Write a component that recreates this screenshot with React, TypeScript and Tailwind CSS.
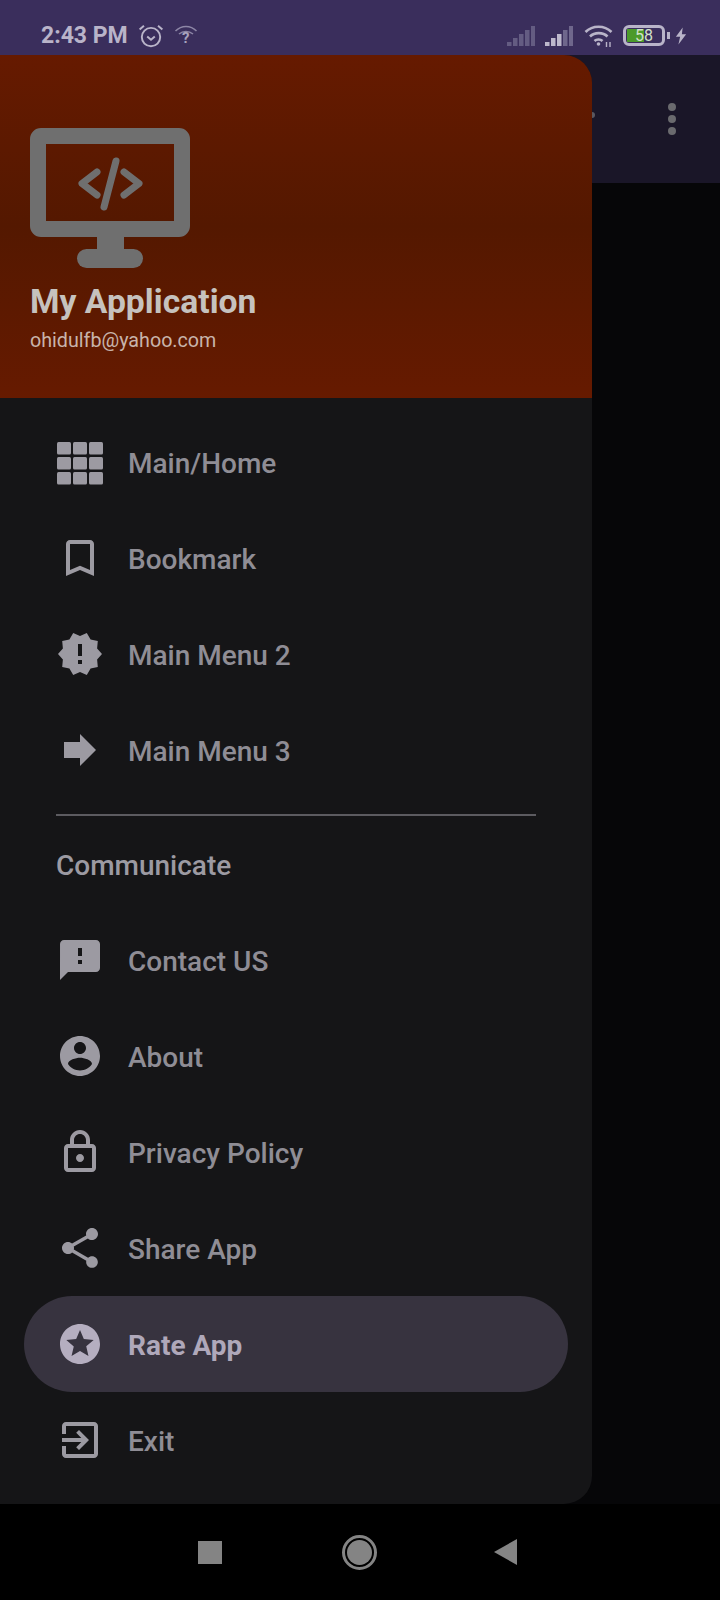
import type { ReactNode } from 'react';

const ROBOTO = 'font-["Roboto",sans-serif]';

function MaterialIcon({ d, className = '' }: { d: string; className?: string }) {
  return (
    <svg viewBox="0 0 24 24" className={`w-12 h-12 fill-current ${className}`}>
      <path d={d} />
    </svg>
  );
}

function GridIcon() {
  const xs = [1, 17, 33];
  const ys = [4, 19, 34];
  return (
    <svg viewBox="0 0 48 48" className="w-12 h-12 fill-current">
      {ys.map((y) =>
        xs.map((x) => <rect key={`${x}-${y}`} x={x} y={y} width="14" height="12.500" rx="1.500" />),
      )}
    </svg>
  );
}

const ICONS = {
  bookmark: 'M17 3H7c-1.1 0-2 .9-2 2v16l7-3 7 3V5c0-1.1-.9-2-2-2zm0 15l-5-2.18L7 18V5h10v13z',
  release:
    'M23 12l-2.44-2.78.34-3.68-3.61-.82-1.89-3.18L12 3 8.6 1.54 6.71 4.72l-3.61.81.34 3.68L1 12l2.44 2.78-.34 3.69 3.61.82 1.89 3.18L12 21l3.4 1.46 1.89-3.18 3.61-.82-.34-3.68L23 12zm-10 5h-2v-2h2v2zm0-4h-2V7h2v6z',
  forward: 'M12 8V4l8 8-8 8v-4H4V8z',
  sms: 'M20 2H4c-1.1 0-1.99.9-1.99 2L2 22l4-4h14c1.1 0 2-.9 2-2V4c0-1.1-.9-2-2-2zm-7 12h-2v-2h2v2zm0-4h-2V6h2v4z',
  account:
    'M12 2C6.48 2 2 6.48 2 12s4.48 10 10 10 10-4.48 10-10S17.52 2 12 2zm0 3c1.66 0 3 1.34 3 3s-1.34 3-3 3-3-1.34-3-3 1.34-3 3-3zm0 14.2c-2.5 0-4.71-1.28-6-3.22.03-1.99 4-3.08 6-3.08 1.99 0 5.97 1.09 6 3.08-1.29 1.94-3.5 3.22-6 3.22z',
  lock: 'M18 8h-1V6c0-2.76-2.24-5-5-5S7 3.24 7 6v2H6c-1.1 0-2 .9-2 2v10c0 1.1.9 2 2 2h12c1.1 0 2-.9 2-2V10c0-1.1-.9-2-2-2zM9 6c0-1.66 1.34-3 3-3s3 1.34 3 3v2H9V6zm9 14H6V10h12v10zm-6-3c1.1 0 2-.9 2-2s-.9-2-2-2-2 .9-2 2 .9 2 2 2z',
  share:
    'M18 16.08c-.76 0-1.44.3-1.96.77L8.91 12.7c.05-.23.09-.46.09-.7s-.04-.47-.09-.7l7.05-4.11c.54.5 1.25.81 2.04.81 1.66 0 3-1.34 3-3s-1.34-3-3-3-3 1.34-3 3c0 .24.04.47.09.7L8.04 9.81C7.5 9.31 6.79 9 6 9c-1.66 0-3 1.34-3 3s1.34 3 3 3c.79 0 1.5-.31 2.04-.81l7.12 4.16c-.05.21-.08.43-.08.65 0 1.61 1.31 2.92 2.92 2.92 1.61 0 2.92-1.31 2.92-2.92s-1.31-2.92-2.92-2.92z',
  star: 'M11.99 2C6.47 2 2 6.48 2 12s4.47 10 9.99 10C17.52 22 22 17.52 22 12S17.52 2 11.99 2zm4.24 16L12 15.45 7.77 18l1.12-4.81-3.73-3.23 4.92-.42L12 5l1.92 4.53 4.92.42-3.73 3.23L16.23 18z',
  exit: 'M10.09 15.59L11.5 17l5-5-5-5-1.41 1.41L12.67 11H3v2h9.67l-2.58 2.59zM19 3H5c-1.11 0-2 .9-2 2v4h2V5h14v14H5v-4H3v4c0 1.1.89 2 2 2h14c1.1 0 2-.9 2-2V5c0-1.1-.9-2-2-2z',
};

function MenuRow({ icon, label, active }: { icon: ReactNode; label: string; active?: boolean }) {
  return (
    <div
      className={`h-24 flex items-center mx-6 pl-8 rounded-[48px] ${
        active ? 'bg-[#37333f] text-[#afa8ba]' : 'text-[#8f8d95]'
      }`}
    >
      <div className={active ? 'text-[#b5aec0]' : 'text-[#9c9aa2]'}>{icon}</div>
      <span className={`ml-6 pt-1 text-[28px] leading-none ${active ? 'font-bold' : 'font-medium'}`}>{label}</span>
    </div>
  );
}

function Signal({ bright, dim }: { bright: number; dim: string }) {
  const bars = [4, 8, 12, 16, 20];
  return (
    <svg width="28" height="22" viewBox="0 0 28 22">
      {bars.map((h, i) => (
        <rect key={h} x={i * 6} y={21 - h} width="4.500" height={h} fill={i < bright ? '#bdb8cc' : dim} />
      ))}
    </svg>
  );
}

function StatusBar() {
  return (
    <div className="h-[55px] bg-[#3a2e5c] flex items-center pt-4 pl-[41px] pr-[33px] text-[#b9b4c9]">
      <span className="text-[23px] font-bold leading-none">2:43 PM</span>
      <svg width="26" height="26" viewBox="0 0 24 24" className="ml-[10px] fill-none stroke-current" strokeWidth="1.800">
        <circle cx="12" cy="13" r="8.500" />
        <path d="M8.500 12.500l3.500 3 3.500-3M1.500 6l4-3.500M22.500 6l-4-3.500" />
      </svg>
      <div className="relative ml-[10px] w-6 h-6">
        <svg width="24" height="24" viewBox="0 0 24 24" className="fill-none stroke-[#8d86a6]" strokeWidth="1.500">
          <path d="M1.500 7c6-6 15-6 21 0M5 10c4-3.500 10-3.500 14 0" />
        </svg>
        <span className="absolute inset-x-0 top-[5px] text-center text-[15px] leading-[18px] font-bold text-[#a8a2bd]">?</span>
      </div>
      <div className="flex-1" />
      <Signal bright={0} dim="#645c82" />
      <div className="w-[10px]" />
      <Signal bright={3} dim="#6f678c" />
      <svg width="30" height="24" viewBox="0 0 30 24" className="ml-[11px] fill-none stroke-current" strokeWidth="2.600">
        <path d="M1.500 8c7-7 19-7 26 0M6 12.500c4.500-4.500 13-4.500 17.500 0M10.500 17c2-2 6-2 8 0" />
        <circle cx="14.500" cy="20" r="1.800" fill="currentColor" stroke="none" />
        <path d="M22.500 18v5M26 18v5" strokeWidth="1.400" />
      </svg>
      <div className="ml-[9px] w-[42px] h-[21px] rounded-[6px] border-[3px] border-current flex items-center p-[1px] relative">
        <div className="h-full w-[17px] bg-[#4b9a2a]" />
        <span className="absolute inset-0 flex items-center justify-center text-[16px] leading-none text-[#d2e0ca]">
          58
        </span>
      </div>
      <div className="ml-[2px] w-[3px] h-[7px] bg-current" />
      <svg width="12" height="18" viewBox="0 0 14 20" className="ml-[5px] fill-current">
        <path d="M9 0L1 11h5l-2 9 9-12H8z" />
      </svg>
    </div>
  );
}

function MonitorLogo() {
  return (
    <svg width="160" height="141" viewBox="0 0 160 141" className="text-[#6f6f6f]">
      <rect x="8" y="8" width="144" height="93" rx="3" fill="none" stroke="currentColor" strokeWidth="16" />
      <rect x="67" y="105" width="27" height="20" fill="currentColor" />
      <rect x="47" y="121" width="66" height="19" rx="9.500" fill="currentColor" />
      <path
        d="M67 44L52 55.500 67 67M94 44L109 55.500 94 67M86 33L74 79"
        fill="none"
        stroke="currentColor"
        strokeWidth="7"
        strokeLinecap="round"
        strokeLinejoin="round"
      />
    </svg>
  );
}

function Drawer() {
  return (
    <div className="relative z-10 w-[592px] shrink-0 rounded-r-[28px] bg-[#151517] overflow-hidden">
      <div className="h-[343px] pl-[30px] pt-[73px] bg-gradient-to-b from-[#661a00] via-[#541800] to-[#661a00]">
        <MonitorLogo />
        <div className="mt-[14px] text-[33.700px] leading-[38px] font-bold text-[#c6c2be]">My Application</div>
        <div className="mt-[8px] text-[19.700px] leading-[24px] text-[#c8b4ab]">ohidulfb@yahoo.com</div>
      </div>

      <div className="pt-4">
        <MenuRow icon={<GridIcon />} label="Main/Home" />
        <MenuRow icon={<MaterialIcon d={ICONS.bookmark} />} label="Bookmark" />
        <MenuRow icon={<MaterialIcon d={ICONS.release} />} label="Main Menu 2" />
        <MenuRow icon={<MaterialIcon d={ICONS.forward} />} label="Main Menu 3" />

        <div className="mx-14 mt-4 h-[2px] bg-[#5c5b60]" />
        <div className="h-24 pl-14 pt-1 flex items-center text-[28px] font-medium text-[#9c9aa2]">Communicate</div>

        <MenuRow icon={<MaterialIcon d={ICONS.sms} />} label="Contact US" />
        <MenuRow icon={<MaterialIcon d={ICONS.account} />} label="About" />
        <MenuRow icon={<MaterialIcon d={ICONS.lock} />} label="Privacy Policy" />
        <MenuRow icon={<MaterialIcon d={ICONS.share} />} label="Share App" />
        <MenuRow icon={<MaterialIcon d={ICONS.star} />} label="Rate App" active />
        <MenuRow icon={<MaterialIcon d={ICONS.exit} />} label="Exit" />
      </div>
    </div>
  );
}

function NavBar() {
  return (
    <div className="h-24 bg-black flex items-center">
      <div className="ml-[198px] w-6 h-[23px] bg-[#848484]" />
      <div className="ml-[120px] w-[35px] h-[35px] rounded-full border-[3px] border-[#848484] p-[2px]">
        <div className="w-full h-full rounded-full bg-[#848484]" />
      </div>
      <svg width="23" height="26" viewBox="0 0 23 26" className="ml-[117px] fill-[#848484]">
        <path d="M23 0v26L0 13z" />
      </svg>
    </div>
  );
}

export default function App() {
  return (
    <div className={`w-[720px] h-[1600px] flex flex-col bg-black ${ROBOTO}`}>
      <StatusBar />
      <div className="h-[1449px] flex">
        <Drawer />
        <div className="flex-1 -ml-7 bg-[#060608]">
          <div className="relative h-32 bg-[#1a1628] flex items-center justify-end pr-[44px]">
            <div className="absolute left-[28px] top-[57px] w-[3px] h-[6px] rounded-r-full bg-[#5a5860]" />
            <div className="flex flex-col gap-1">
              <div className="w-2 h-2 rounded-full bg-[#6a6a6e]" />
              <div className="w-2 h-2 rounded-full bg-[#6a6a6e]" />
              <div className="w-2 h-2 rounded-full bg-[#6a6a6e]" />
            </div>
          </div>
        </div>
      </div>
      <NavBar />
    </div>
  );
}
